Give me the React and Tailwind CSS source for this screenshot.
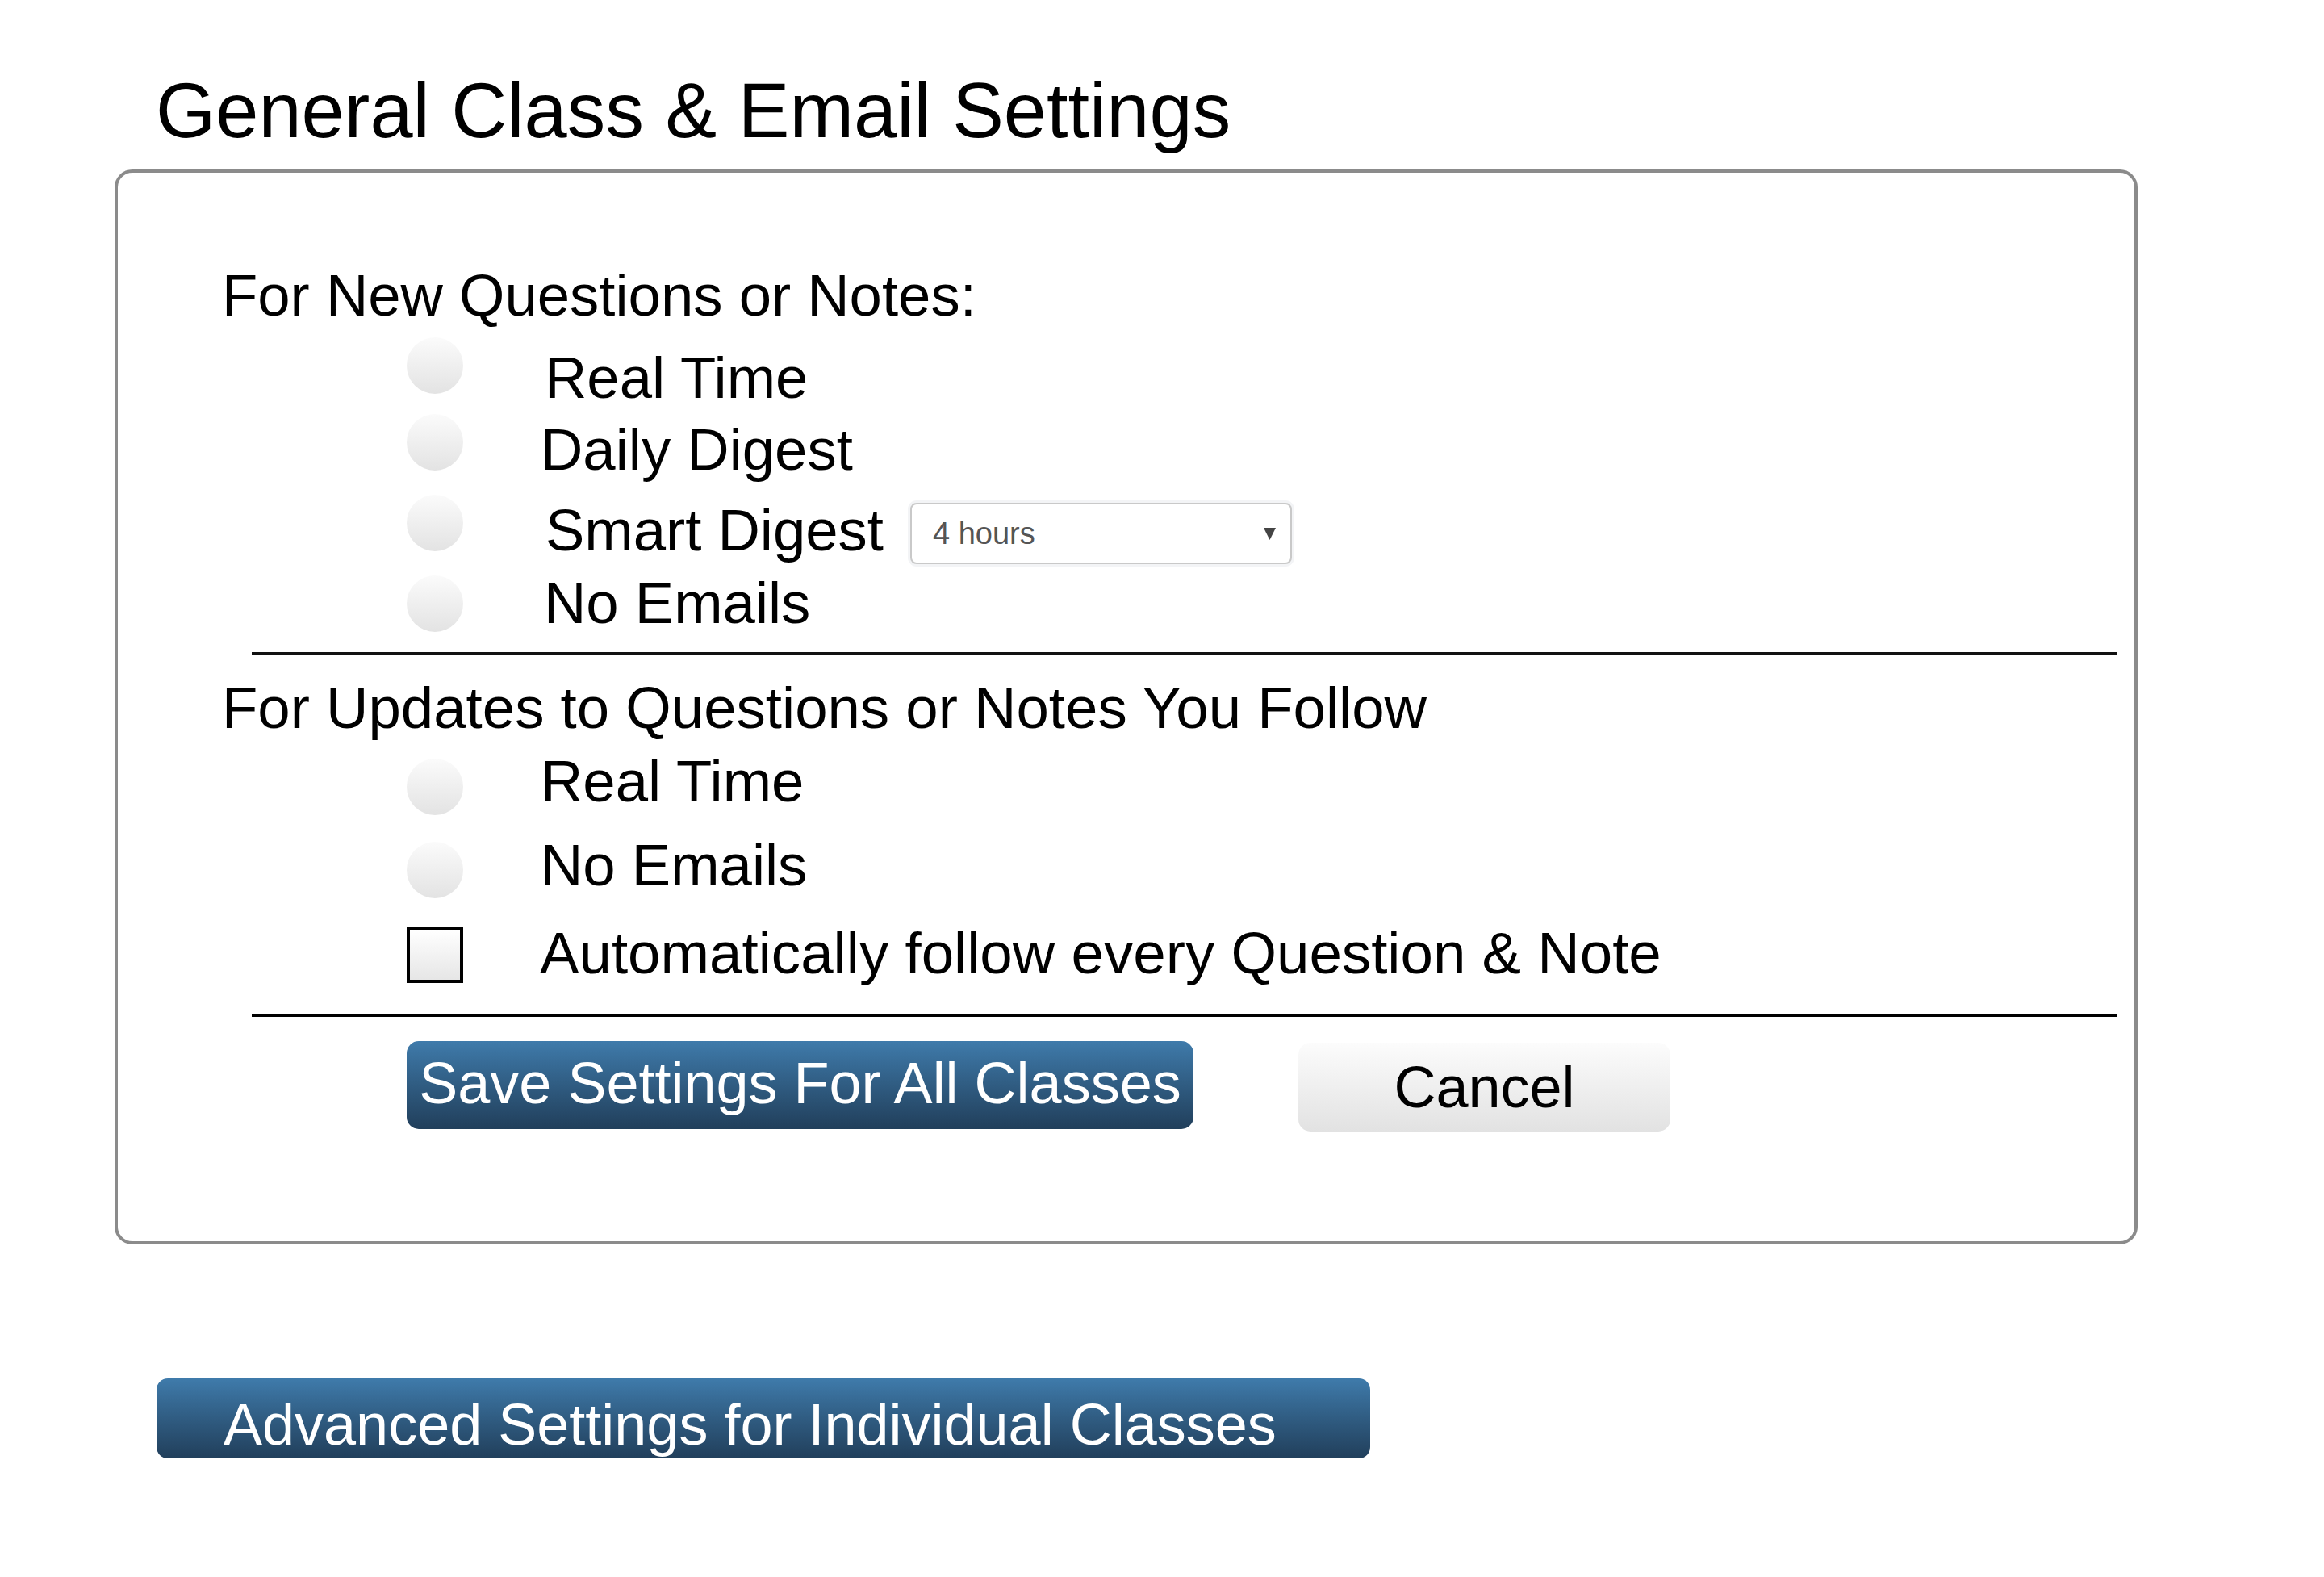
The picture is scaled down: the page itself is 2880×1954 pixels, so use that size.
const newPostOptions = [
  { label: "Real Time", row: "mt-[30px]", mark: "-mt-[14px]", text: "ml-[101px]" },
  { label: "Daily Digest", row: "mt-[17px]", mark: "-mt-[8px]", text: "ml-[96px]" },
  { label: "Smart Digest", row: "mt-[28px]", mark: "-mt-[8px]", text: "ml-[102px]", digest: true },
  { label: "No Emails", row: "mt-[12px]", mark: "mt-[2px]", text: "ml-[100px]" },
];

const followOptions = [
  { label: "Real Time", row: "mt-[19px]", mark: "mt-[8px]", text: "ml-[96px]" },
  { label: "No Emails", row: "mt-[26px]", mark: "mt-[7px]", text: "ml-[96px]" },
];

function Radio({ className }) {
  return (
    <span
      className={`ml-[229px] h-[70px] w-[70px] shrink-0 rounded-full bg-linear-to-b from-[#fbfbfb] to-[#e3e3e3] ${className}`}
    />
  );
}

function DigestSelect() {
  return (
    <div className="ml-[33px] mt-[2px] flex h-[76px] w-[473px] items-center justify-between rounded-[8px] border-2 border-[#c9c9c9] bg-white pl-[26px] pr-[18px] shadow-[0_0_0_3px_#f3f4f6]">
      <span className="text-[38px] leading-none text-[#555]">4 hours</span>
      <svg width="15" height="16" viewBox="0 0 15 16">
        <path d="M0 1h15L7.5 16z" fill="#444" />
      </svg>
    </div>
  );
}

function OptionRow({ option }) {
  return (
    <div className={`flex items-start ${option.row}`}>
      <Radio className={option.mark} />
      <span className={`text-[72.5px] leading-[72px] whitespace-nowrap ${option.text}`}>
        {option.label}
      </span>
      {option.digest && <DigestSelect />}
    </div>
  );
}

export default function App() {
  return (
    <div className="min-h-screen bg-white pl-[142px] pb-[140px] font-['Liberation_Sans',Arial,sans-serif] text-black">
      <h1 className="ml-[51px] pt-[90px] text-[95.5px] leading-[95px] font-normal whitespace-nowrap">
        General Class &amp; Email Settings
      </h1>

      <div className="mt-[25px] w-[2507px] rounded-[22px] border-4 border-[#8b8b8b]">
        <div className="pl-[129px] pt-[116px] pb-[136px]">
          <p className="text-[72.5px] leading-[72px] whitespace-nowrap">For New Questions or Notes:</p>
          {newPostOptions.map((option) => (
            <OptionRow key={option.label} option={option} />
          ))}

          <div className="ml-[37px] mt-[25px] h-[3px] w-[2311px] bg-[#111]" />

          <p className="mt-[30px] text-[72.6px] leading-[72px] whitespace-nowrap">
            For Updates to Questions or Notes You Follow
          </p>
          {followOptions.map((option) => (
            <OptionRow key={option.label} option={option} />
          ))}
          <div className="mt-[32px] flex items-start">
            <span className="ml-[229px] mt-[3px] h-[70px] w-[70px] shrink-0 border-4 border-black bg-linear-to-b from-white to-[#e6e6e6]" />
            <span className="ml-[95px] text-[72.7px] leading-[72px] whitespace-nowrap">
              Automatically follow every Question &amp; Note
            </span>
          </div>

          <div className="ml-[37px] mt-[39px] h-[3px] w-[2311px] bg-black" />

          <div className="mt-[30px] flex items-start">
            <button className="ml-[229px] flex h-[109px] w-[975px] items-start justify-center rounded-[15px] bg-linear-to-b from-[#3f7bab] to-[#213f5b] pt-[16px] text-[72px] leading-none whitespace-nowrap text-white">
              Save Settings For All Classes
            </button>
            <button className="ml-[130px] mt-[2px] flex h-[110px] w-[461px] items-center justify-center rounded-[15px] bg-linear-to-b from-[#fcfcfc] to-[#e2e2e2] text-[72px] leading-none text-black">
              Cancel
            </button>
          </div>
        </div>
      </div>

      <button className="ml-[52px] mt-[166px] flex h-[99px] w-[1504px] items-start rounded-[14px] bg-linear-to-b from-[#3f7bab] to-[#213f5b] pl-[83px] pt-[21px] text-[72px] leading-none whitespace-nowrap text-white">
        Advanced Settings for Individual Classes
      </button>
    </div>
  );
}
